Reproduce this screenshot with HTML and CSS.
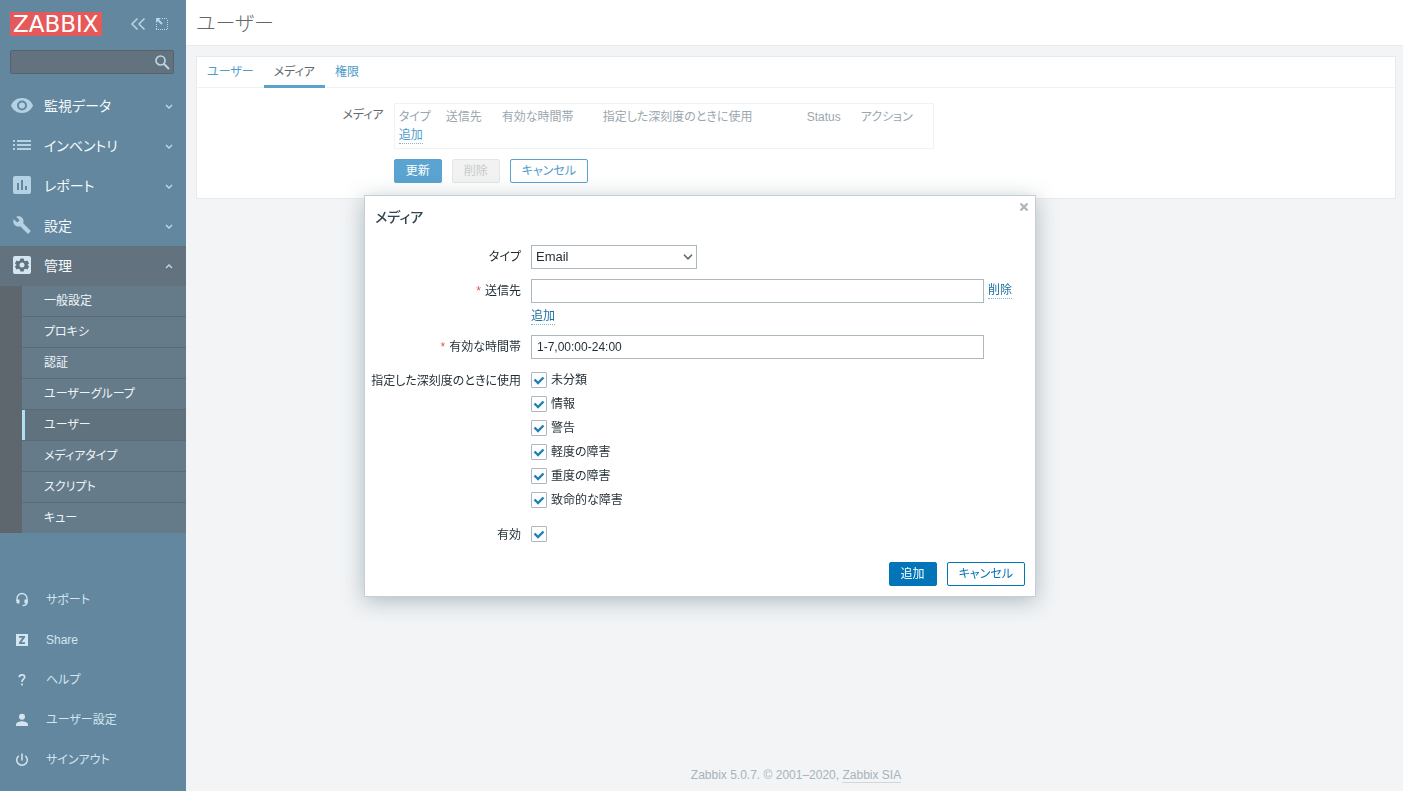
FILE: index.html
```html
<!DOCTYPE html>
<html lang="ja">
<head>
<meta charset="utf-8">
<meta name="viewport" content="width=device-width, initial-scale=1">
<title>ユーザー - Zabbix</title>
<link rel="stylesheet" href="styles.css">
</head>
<body>
<div class="app">
  <aside class="sidebar">
    <div class="sidebar-header">
      <a class="logo" href="#">ZABBIX</a>
      <button class="icon-button" type="button" aria-label="サイドバーを縮小">
        <svg width="16" height="16" viewBox="0 0 16 16" fill="none" stroke="currentColor" stroke-width="1.5"><path d="M7.500 2.500 2 8l5.500 5.500M14.500 2.500 9 8l5.500 5.500"/></svg>
      </button>
      <button class="icon-button" type="button" aria-label="サイドバーを隠す">
        <svg width="16" height="16" viewBox="0 0 16 16" fill="none" stroke="currentColor"><path d="M8 2.500h6M13.500 4v10M2.500 8v6M2 13.500h12" stroke-dasharray="1 1"/><path d="M3 3l5 5" stroke-width="1.800"/><path d="M2 2h5L2 7z" fill="currentColor" stroke="none"/></svg>
      </button>
    </div>
    <form class="search">
      <input class="search-input" type="text" aria-label="検索">
      <button class="search-button" type="button" aria-label="検索">
        <svg width="16" height="16" viewBox="0 0 16 16" fill="none" stroke="currentColor"><circle cx="6.500" cy="6.500" r="4.500" stroke-width="1.700"/><path d="M9.800 9.800 15 15" stroke-width="2"/></svg>
      </button>
    </form>
    <nav class="menu">
      <a class="menu-item" href="#">
        <svg class="menu-icon" viewBox="0 0 24 24"><path fill="currentColor" fill-rule="evenodd" d="M12 4C6.500 4 2.500 7.500 1 11.500c1.500 4 5.500 7.500 11 7.500s9.500-3.500 11-7.500c-1.500-4-5.500-7.500-11-7.500zm0 2.500a5 5 0 1 1 0 10 5 5 0 0 1 0-10zm0 2a3 3 0 1 0 0 6 3 3 0 0 0 0-6z"/></svg>
        <span>監視データ</span>
        <svg class="chevron" viewBox="0 0 8 6"><path d="M1 2l3 3 3-3"/></svg>
      </a>
      <a class="menu-item" href="#">
        <svg class="menu-icon" viewBox="0 0 24 24"><path fill="currentColor" d="M3 6h2v2H3zm0 4h2v2H3zm0 4h2v2H3zM7 6h14v2H7zm0 4h14v2H7zm0 4h14v2H7z"/></svg>
        <span>インベントリ</span>
        <svg class="chevron" viewBox="0 0 8 6"><path d="M1 2l3 3 3-3"/></svg>
      </a>
      <a class="menu-item" href="#">
        <svg class="menu-icon" viewBox="0 0 24 24"><path fill="currentColor" fill-rule="evenodd" d="M5 2h14a2 2 0 0 1 2 2v14a2 2 0 0 1-2 2H5a2 2 0 0 1-2-2V4a2 2 0 0 1 2-2zm2 7v7h2V9zm4-3v10h2V6zm4 6v4h2v-4z"/></svg>
        <span>レポート</span>
        <svg class="chevron" viewBox="0 0 8 6"><path d="M1 2l3 3 3-3"/></svg>
      </a>
      <a class="menu-item" href="#">
        <svg class="menu-icon" viewBox="0 0 24 24"><path fill="currentColor" transform="translate(2.500 1.500) scale(.79)" d="M22.700 19l-9.100-9.100c.9-2.300.4-5-1.500-6.900-2-2-5-2.400-7.400-1.300L9 6 6 9 1.600 4.700C.4 7.100.9 10.100 2.900 12.100c1.900 1.900 4.600 2.400 6.900 1.500l9.100 9.100c.4.4 1 .4 1.400 0l2.300-2.300c.5-.4.5-1.100.1-1.400z"/></svg>
        <span>設定</span>
        <svg class="chevron" viewBox="0 0 8 6"><path d="M1 2l3 3 3-3"/></svg>
      </a>
      <a class="menu-item menu-item-open" href="#">
        <svg class="menu-icon" viewBox="0 0 24 24"><path fill="currentColor" fill-rule="evenodd" d="M5 2h14a2 2 0 0 1 2 2v14a2 2 0 0 1-2 2H5a2 2 0 0 1-2-2V4a2 2 0 0 1 2-2zm5.300 2.500-.4 2.100-1.200.7-2.100-.7-1.700 2.900L6.500 11l-1.600 1.500 1.700 2.900 2.100-.7 1.200.7.4 2.100h3.400l.4-2.100 1.200-.7 2.100.7 1.700-2.900L17.500 11l1.600-1.500-1.700-2.900-2.100.7-1.200-.7-.4-2.100zM12 8.500a2.500 2.500 0 1 1 0 5 2.500 2.500 0 0 1 0-5z"/></svg>
        <span>管理</span>
        <svg class="chevron" viewBox="0 0 8 6"><path d="M1 5l3-3 3 3"/></svg>
      </a>
      <div class="submenu">
        <a class="submenu-item" href="#">一般設定</a>
        <a class="submenu-item" href="#">プロキシ</a>
        <a class="submenu-item" href="#">認証</a>
        <a class="submenu-item" href="#">ユーザーグループ</a>
        <a class="submenu-item submenu-item-current" href="#">ユーザー</a>
        <a class="submenu-item" href="#">メディアタイプ</a>
        <a class="submenu-item" href="#">スクリプト</a>
        <a class="submenu-item" href="#">キュー</a>
      </div>
    </nav>
    <nav class="user-menu">
      <a class="user-item" href="#">
        <svg class="user-icon" viewBox="0 0 16 16" fill="none" stroke="currentColor"><path d="M3 9V6.500a5 5 0 0 1 10 0v4c0 2-1.500 3-4.500 3" stroke-width="1.300"/><path fill="currentColor" stroke="none" d="M2.400 7.500H5.500V11.500H4a1.600 1.600 0 0 1-1.600-1.600zM10.500 7.500h3.100v2.400A1.600 1.600 0 0 1 12 11.500h-1.500z"/></svg>
        <span>サポート</span>
      </a>
      <a class="user-item" href="#">
        <svg class="user-icon" viewBox="0 0 16 16"><path fill="currentColor" fill-rule="evenodd" d="M2 2h12v12H2zm3 2v1.700h3.300L5 10.400V12h6v-1.700H7.500L11 5.600V4z"/></svg>
        <span>Share</span>
      </a>
      <a class="user-item" href="#">
        <svg class="user-icon" viewBox="0 0 16 16" fill="none" stroke="currentColor" stroke-width="1.700"><path d="M5.200 5.200C5.300 3.600 6.400 2.800 8 2.800s2.700.9 2.700 2.200C10.700 7 8 7.200 8 9.500v.5"/><path d="M8 11.500v2"/></svg>
        <span>ヘルプ</span>
      </a>
      <a class="user-item" href="#">
        <svg class="user-icon" viewBox="0 0 16 16" fill="currentColor"><circle cx="8" cy="4.800" r="3"/><path d="M2 14v-1.500c0-2.200 4-3.300 6-3.300s6 1.100 6 3.300V14z"/></svg>
        <span>ユーザー設定</span>
      </a>
      <a class="user-item" href="#">
        <svg class="user-icon" viewBox="0 0 16 16" fill="none" stroke="currentColor" stroke-width="1.500"><path d="M8 1.500v7M4.700 3.800a5.300 5.300 0 1 0 6.600 0"/></svg>
        <span>サインアウト</span>
      </a>
    </nav>
  </aside>

  <div class="page">
    <header class="page-header"><h1 class="page-title">ユーザー</h1></header>
    <main class="panel">
      <nav class="tabs">
        <a class="tab" href="#">ユーザー</a>
        <a class="tab tab-active" href="#">メディア</a>
        <a class="tab" href="#">権限</a>
      </nav>
      <div class="user-form">
        <div class="form-label">メディア</div>
        <div class="form-field">
          <div class="media-box">
            <table class="media-table">
              <thead>
                <tr><th class="col-type">タイプ</th><th class="col-sendto">送信先</th><th class="col-period">有効な時間帯</th><th class="col-severity">指定した深刻度のときに使用</th><th class="col-status">Status</th><th>アクション</th></tr>
              </thead>
              <tbody>
                <tr><td colspan="6"><button class="link-button link-faded" type="button">追加</button></td></tr>
              </tbody>
            </table>
          </div>
          <div class="form-actions">
            <button class="button button-faded" type="button">更新</button>
            <button class="button" type="button" disabled>削除</button>
            <button class="button button-alt button-alt-faded" type="button">キャンセル</button>
          </div>
        </div>
      </div>
    </main>
    <footer class="page-footer">Zabbix 5.0.7. © 2001–2020, <a class="footer-link" href="#">Zabbix SIA</a></footer>
  </div>
</div>

<div class="overlay">
  <section class="dialog" role="dialog" aria-labelledby="dialog-title">
    <button class="dialog-close" type="button" aria-label="閉じる">
      <svg width="8" height="8" viewBox="0 0 8 8" stroke="currentColor" stroke-width="2.200"><path d="M.5.5l7 7M7.500.5l-7 7"/></svg>
    </button>
    <h2 class="dialog-title" id="dialog-title">メディア</h2>
    <form class="dialog-form">
      <label class="dialog-label" for="type">タイプ</label>
      <div class="select-wrap">
        <select class="select" id="type"><option>Email</option></select>
        <svg class="select-arrow" viewBox="0 0 10 6"><path d="M1 .8l4 4 4-4"/></svg>
      </div>

      <label class="dialog-label required" for="sendto">送信先</label>
      <div class="sendto">
        <div class="sendto-row">
          <input class="text-input" id="sendto" type="text">
          <button class="link-button" type="button">削除</button>
        </div>
        <button class="link-button" type="button">追加</button>
      </div>

      <label class="dialog-label required" for="period">有効な時間帯</label>
      <input class="text-input" id="period" type="text" value="1-7,00:00-24:00">

      <div class="dialog-label" id="severity-label">指定した深刻度のときに使用</div>
      <div class="checks" role="group" aria-labelledby="severity-label">
        <label class="check"><span class="check-box"><input class="check-input" type="checkbox" checked><svg class="check-mark" viewBox="0 0 16 16"><path d="M3.500 7.500 7 11l5.500-5.500"/></svg></span>未分類</label>
        <label class="check"><span class="check-box"><input class="check-input" type="checkbox" checked><svg class="check-mark" viewBox="0 0 16 16"><path d="M3.500 7.500 7 11l5.500-5.500"/></svg></span>情報</label>
        <label class="check"><span class="check-box"><input class="check-input" type="checkbox" checked><svg class="check-mark" viewBox="0 0 16 16"><path d="M3.500 7.500 7 11l5.500-5.500"/></svg></span>警告</label>
        <label class="check"><span class="check-box"><input class="check-input" type="checkbox" checked><svg class="check-mark" viewBox="0 0 16 16"><path d="M3.500 7.500 7 11l5.500-5.500"/></svg></span>軽度の障害</label>
        <label class="check"><span class="check-box"><input class="check-input" type="checkbox" checked><svg class="check-mark" viewBox="0 0 16 16"><path d="M3.500 7.500 7 11l5.500-5.500"/></svg></span>重度の障害</label>
        <label class="check"><span class="check-box"><input class="check-input" type="checkbox" checked><svg class="check-mark" viewBox="0 0 16 16"><path d="M3.500 7.500 7 11l5.500-5.500"/></svg></span>致命的な障害</label>
      </div>

      <label class="dialog-label" for="enabled">有効</label>
      <div class="checks"><span class="check-box"><input class="check-input" id="enabled" type="checkbox" checked><svg class="check-mark" viewBox="0 0 16 16"><path d="M3.500 7.500 7 11l5.500-5.500"/></svg></span></div>
    </form>
    <div class="dialog-actions">
      <button class="button" type="button">追加</button>
      <button class="button button-alt" type="button">キャンセル</button>
    </div>
  </section>
</div>
</body>
</html>
```
FILE: styles.css
```css
* { box-sizing: border-box; }

body {
  margin: 0;
  background: #f2f4f6;
  color: #1f2c33;
  font: 12px/18px "Liberation Sans", "Noto Sans CJK JP", sans-serif;
  font-feature-settings: "palt";
}

button, input, select {
  margin: 0;
  font: inherit;
  font-feature-settings: inherit;
  color: inherit;
}

a { color: inherit; text-decoration: none; }

.app { display: flex; min-height: 100vh; }

/* Sidebar */
.sidebar {
  display: flex;
  flex-direction: column;
  flex: 0 0 186px;
  padding-bottom: 11px;
  background: #62879e;
}

.sidebar-header {
  display: flex;
  align-items: center;
  gap: 8px;
  padding: 12px 16px 0 10px;
}

.logo {
  margin-right: auto;
  padding: 0 3px;
  background: #e45959;
  color: #fff;
  font: 23px/24px "DejaVu Sans", sans-serif;
}

.icon-button, .search-button {
  display: flex;
  padding: 0;
  border: 0;
  background: none;
  color: #b9d5e6;
}

.search { display: flex; position: relative; margin: 14px 12px 0 10px; }

.search-input {
  width: 100%;
  height: 24px;
  padding: 0 26px 0 6px;
  border: 1px solid #56636d;
  border-radius: 2px;
  background: #63727f;
}

.search-button { position: absolute; top: 4px; right: 4px; }

.menu { padding-top: 12px; }

.menu-item {
  display: flex;
  align-items: center;
  gap: 10px;
  height: 40px;
  padding: 0 13px 0 10px;
  color: #f4f9fc;
  font-size: 14px;
}

.menu-item-open { background: #62727f; }
.menu-icon { width: 24px; height: 24px; color: #b4d2e4; }
.menu-item-open .menu-icon { color: #d3e7f3; }

.chevron {
  width: 8px;
  height: 6px;
  margin-left: auto;
  fill: none;
  stroke: #c0d9e8;
  stroke-width: 1.4;
}

.submenu { border-left: 22px solid #5e676d; background: #657b8a; }

.submenu-item {
  display: block;
  padding: 6px 0 6px 22px;
  color: #eef5f9;
}

.submenu-item + .submenu-item { border-top: 1px solid #5a6b77; }
.submenu-item-current { background: #61727f; box-shadow: inset 3px 0 #b3dcf5; }

.user-menu { margin-top: auto; }

.user-item {
  display: flex;
  align-items: center;
  gap: 16px;
  height: 40px;
  padding-left: 14px;
  color: #d3e5f0;
}

.user-icon { width: 16px; height: 16px; }

/* Page */
.page { display: flex; flex: 1; flex-direction: column; min-width: 0; }

.page-header {
  height: 46px;
  padding: 9px 10px;
  border-bottom: 1px solid #e8ebed;
  background: #fff;
}

.page-title { margin: 0; color: #666; font-size: 20px; font-weight: 300; line-height: 30px; }

.panel {
  margin: 10px 7px 0 10px;
  border: 1px solid #e8ebed;
  background: #fff;
}

.tabs { display: flex; border-bottom: 1px solid #eff1f3; color: #4f9cca; }
.tab { padding: 6px 10px; }

.tab-active {
  margin-bottom: -1px;
  padding-bottom: 4px;
  border-bottom: 3px solid #5ba3cd;
  color: #62696e;
}

.user-form {
  display: grid;
  grid-template-columns: 15% 1fr;
  column-gap: 10px;
  padding: 15px 10px;
}

.form-label { padding-top: 3px; color: #62696e; text-align: right; }

.media-box {
  width: 540px;
  max-width: 100%;
  padding: 4px;
  border: 1px solid #f0f2f3;
}

.media-table { border-collapse: collapse; color: #9ba7ae; }
.media-table th { padding: 0; font-weight: 400; text-align: left; white-space: nowrap; }
.media-table td { padding: 0; }
.col-type { width: 47px; }
.col-sendto { width: 56px; }
.col-period { width: 101px; }
.col-severity { width: 204px; }
.col-status { width: 54px; }

.form-actions { display: flex; gap: 10px; margin-top: 10px; }

.button {
  height: 24px;
  padding: 0 11px;
  border: 1px solid #0275b8;
  border-radius: 2px;
  background: #0275b8;
  color: #fff;
  line-height: 20px;
}

.button-faded { border-color: #5ba3d0; background: #5ba3d0; }
.button-alt { background: #fff; color: #0275b8; }
.button-alt-faded { border-color: #5ba3d0; color: #4f9cca; }
.button:disabled { border-color: #e3e5e6; background: #f2f2f2; color: #c6cacd; }

.link-button {
  padding: 0;
  border: 0;
  border-bottom: 1px dotted #7fb5d6;
  background: none;
  color: #1f6f9f;
  line-height: 16px;
}

.link-faded { color: #4f9cca; }

.page-footer { margin-top: auto; padding: 0 7px 7px 10px; color: #a8b3ba; text-align: center; }
.footer-link { border-bottom: 1px solid #d0d6da; }

/* Dialog */
.overlay {
  position: fixed;
  inset: 0;
  display: flex;
  align-items: center;
  justify-content: center;
  padding-right: 3px;
}

.dialog {
  position: relative;
  width: 672px;
  max-width: 100%;
  padding: 10px;
  border: 1px solid #c5ced3;
  background: #fff;
  box-shadow: 0 4px 20px rgba(50, 80, 95, 0.35);
}

.dialog-close {
  position: absolute;
  top: 7px;
  right: 7px;
  display: flex;
  padding: 0;
  border: 0;
  background: none;
  color: #aab5bb;
}

.dialog-title { margin: 0 0 17px; color: #33444e; font-size: 14px; font-weight: 500; line-height: 22px; }

.dialog-form {
  display: grid;
  grid-template-columns: 146px minmax(0, 1fr);
  gap: 10px;
}

.dialog-label {
  display: flex;
  justify-content: flex-end;
  line-height: 24px;
  white-space: nowrap;
}

.required::before { content: "*"; margin-right: 4px; color: #e45959; }

.select-wrap { position: relative; justify-self: start; width: 166px; }

.select {
  display: block;
  width: 100%;
  height: 24px;
  padding: 0 20px 0 4px;
  border: 1px solid #acb8be;
  border-radius: 0;
  background: #fff;
  appearance: none;
  font-size: 13px;
}

.select-arrow {
  position: absolute;
  top: 9px;
  right: 4px;
  width: 10px;
  height: 6px;
  fill: none;
  stroke: #5d666b;
  stroke-width: 1.6;
  pointer-events: none;
}

.text-input {
  width: 453px;
  max-width: 100%;
  height: 24px;
  padding: 0 5px;
  border: 1px solid #acb8be;
  background: #fff;
}

.sendto { display: flex; flex-direction: column; align-items: flex-start; gap: 5px; }
.sendto-row { display: flex; align-items: center; gap: 4px; width: 100%; }

.checks { display: flex; flex-direction: column; gap: 8px; padding: 3px 0 5px; }
.check { display: flex; align-items: center; gap: 4px; height: 16px; }
.check-box { position: relative; display: flex; width: 16px; height: 16px; }

.check-input {
  width: 16px;
  height: 16px;
  border: 1px solid #acb8be;
  border-radius: 1px;
  background: #fff;
  appearance: none;
}

.check-mark {
  position: absolute;
  inset: 0;
  visibility: hidden;
  fill: none;
  stroke: #1f7fb8;
  stroke-width: 2.4;
  pointer-events: none;
}

.check-input:checked + .check-mark { visibility: visible; }

.dialog-actions { display: flex; justify-content: flex-end; gap: 10px; margin-top: 15px; }
```
